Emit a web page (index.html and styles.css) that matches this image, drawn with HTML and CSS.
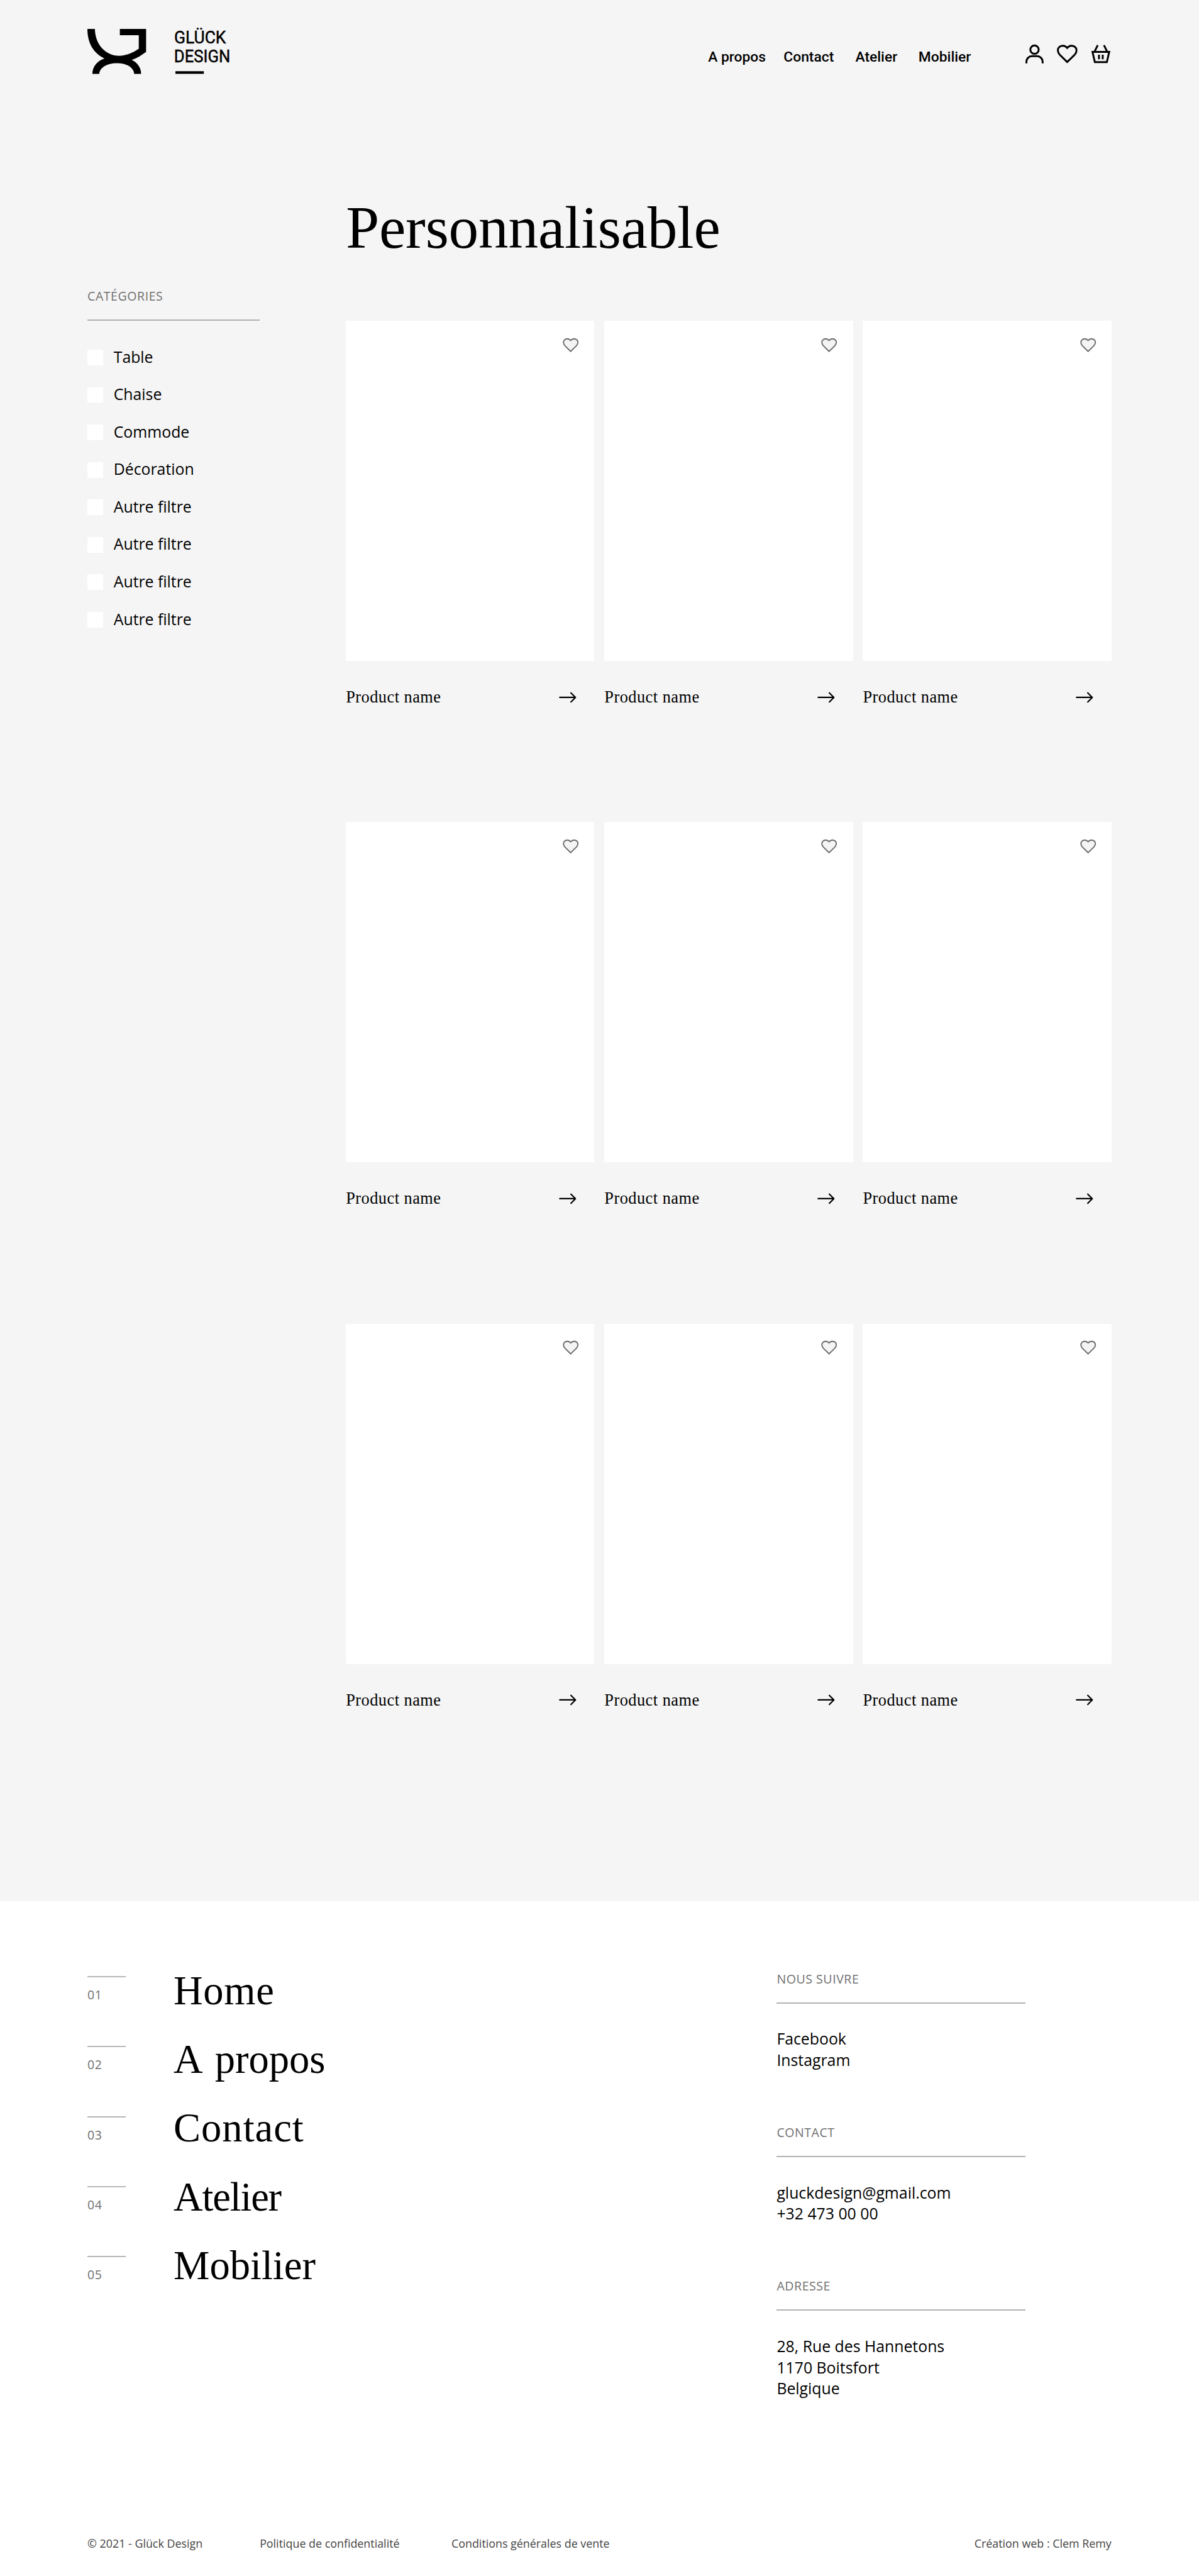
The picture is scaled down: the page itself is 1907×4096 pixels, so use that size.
FILE: index.html
```html
<!DOCTYPE html>
<html lang="fr">
<head>
<meta charset="utf-8">
<title>Glück Design – Personnalisable</title>
<link rel="stylesheet" href="styles.css">
</head>
<body>
<svg class="sprite" aria-hidden="true">
  <symbol id="heart" viewBox="0 0 33 30"><path d="M16.5 27.8 5 16.6C.8 12.4.6 7 3.5 4.1 7 .7 12.8 1 16.5 5.200C20.200 1 26 .7 29.500 4.100 32.400 7 32.200 12.400 28 16.600Z"/></symbol>
  <symbol id="arrow" viewBox="0 0 28 18"><path d="M1.300 9H26.500M19.200 1.700 26.500 9l-7.300 7.300"/></symbol>
</svg>

<header class="header">
  <a class="logo" aria-label="Glück Design">
    <svg viewBox="0 0 230 76">
      <path d="M0 0H12C12.500 25 29 43 51 43 62 43 73 38 82.300 31.700V10H52V0H94V36.700C87 42 79 47 71 49.700 80 54 86 62 86 72H75C74 61 62 55 47 55 31 55 20 62 19 72H8C8 61 15 51.500 27.300 47.300 10 39 0 23 0 0Z"/>
      <text x="139" y="23" textLength="83" lengthAdjust="spacingAndGlyphs">GLÜCK</text>
      <text x="138.800" y="53.300" textLength="90" lengthAdjust="spacingAndGlyphs">DESIGN</text>
      <rect x="141" y="67.700" width="45.500" height="4.200"/>
    </svg>
  </a>
  <nav class="nav">
    <a>A propos</a><a>Contact</a><a>Atelier</a><a>Mobilier</a>
  </nav>
  <div class="tools">
    <svg class="icon user" viewBox="0 0 29 31"><circle cx="14.500" cy="9" r="6.700"/><path d="M1.500 31V29C1.500 23 5.500 19.500 10.500 19.500H18.500C23.500 19.500 27.500 23 27.500 29V31"/></svg>
    <svg class="icon heart"><use href="#heart"/></svg>
    <svg class="icon basket" viewBox="0 0 30 31"><path d="M1.600 12.500H28.400L24.600 29H5.400ZM5 12 10 1.800M25 12 20 1.800M12 17.200V24.500M18 17.200V24.500"/></svg>
  </div>
</header>

<main class="main">
  <aside class="filters">
    <h2 class="label">CATÉGORIES</h2>
    <ul>
      <li><i></i><span>Table</span></li>
      <li><i></i><span>Chaise</span></li>
      <li><i></i><span>Commode</span></li>
      <li><i></i><span>Décoration</span></li>
      <li><i></i><span>Autre filtre</span></li>
      <li><i></i><span>Autre filtre</span></li>
      <li><i></i><span>Autre filtre</span></li>
      <li><i></i><span>Autre filtre</span></li>
    </ul>
  </aside>
  <section class="catalog">
    <h1>Personnalisable</h1>
    <div class="products">
      <article><div class="photo"><svg><use href="#heart"/></svg></div><div class="caption"><h3>Product name</h3><svg><use href="#arrow"/></svg></div></article>
      <article><div class="photo"><svg><use href="#heart"/></svg></div><div class="caption"><h3>Product name</h3><svg><use href="#arrow"/></svg></div></article>
      <article><div class="photo"><svg><use href="#heart"/></svg></div><div class="caption"><h3>Product name</h3><svg><use href="#arrow"/></svg></div></article>
      <article><div class="photo"><svg><use href="#heart"/></svg></div><div class="caption"><h3>Product name</h3><svg><use href="#arrow"/></svg></div></article>
      <article><div class="photo"><svg><use href="#heart"/></svg></div><div class="caption"><h3>Product name</h3><svg><use href="#arrow"/></svg></div></article>
      <article><div class="photo"><svg><use href="#heart"/></svg></div><div class="caption"><h3>Product name</h3><svg><use href="#arrow"/></svg></div></article>
      <article><div class="photo"><svg><use href="#heart"/></svg></div><div class="caption"><h3>Product name</h3><svg><use href="#arrow"/></svg></div></article>
      <article><div class="photo"><svg><use href="#heart"/></svg></div><div class="caption"><h3>Product name</h3><svg><use href="#arrow"/></svg></div></article>
      <article><div class="photo"><svg><use href="#heart"/></svg></div><div class="caption"><h3>Product name</h3><svg><use href="#arrow"/></svg></div></article>
    </div>
  </section>
</main>

<footer class="footer">
  <div class="footer-main">
    <ol class="numbers"><li>01</li><li>02</li><li>03</li><li>04</li><li>05</li></ol>
    <ul class="menu"><li>Home</li><li>A propos</li><li>Contact</li><li>Atelier</li><li>Mobilier</li></ul>
    <div class="infos">
      <section><h2 class="label">NOUS SUIVRE</h2><p>Facebook<br>Instagram</p></section>
      <section><h2 class="label">CONTACT</h2><p>gluckdesign@gmail.com<br>+32 473 00 00</p></section>
      <section><h2 class="label">ADRESSE</h2><p>28, Rue des Hannetons<br>1170 Boitsfort<br>Belgique</p></section>
    </div>
  </div>
  <div class="legal">
    <span>© 2021 - Glück Design</span><span>Politique de confidentialité</span><span>Conditions générales de vente</span><span>Création web : Clem Remy</span>
  </div>
</footer>
</body>
</html>
```
FILE: styles.css
```css
* { box-sizing: border-box; margin: 0; padding: 0; }
html { font-size: 9.931px; }
body {
  width: 192rem;
  height: 4096px;
  overflow: hidden;
  background: #f5f5f5;
  color: #000;
  font-family: "Open Sans", "Noto Sans", sans-serif;
}
ul, ol { list-style: none; }
svg { display: block; flex: none; }
.sprite { display: none; }

/* Header */
.header { display: flex; align-items: flex-start; height: 30.4rem; padding: 4.6rem 14rem 0; }
.logo svg { width: 23rem; height: 7.6rem; overflow: visible; }
.logo text { font: 400 27px Roboto, sans-serif; stroke: #000; stroke-width: .5; }
.nav { display: flex; margin: 3.06rem 0 0 76.4rem; font: 500 2.3rem/3rem Roboto, sans-serif; white-space: nowrap; }
.nav a:nth-child(1) { width: 12.1rem; }
.nav a:nth-child(2) { width: 11.5rem; }
.nav a:nth-child(3) { width: 10.1rem; }
.nav a:nth-child(4) { width: 8.4rem; }
.tools { display: flex; margin: 2.45rem .2rem 0 auto; }
.icon { fill: none; stroke: #000; stroke-width: 3; }
.user { width: 2.9rem; height: 3.1rem; }
.heart { width: 3.3rem; height: 3rem; margin: .15rem 2.2rem 0; }
.basket { width: 3rem; height: 3.1rem; }

/* Filters */
.main { display: flex; height: 274.05rem; padding: 0 14rem; }
.filters { width: 27.6rem; margin-right: 13.8rem; padding-top: 15.85rem; }
.label {
  padding-bottom: 2.55rem;
  border-bottom: 2px solid #b2b2b2;
  color: #707070;
  font-size: 1.97rem;
  font-weight: 400;
  line-height: 2.4rem;
  letter-spacing: .055rem;
}
.filters ul { margin-top: 2.84rem; }
.filters li { display: flex; align-items: center; gap: 1.7rem; height: 6rem; font-size: 2.5rem; line-height: 3.4rem; }
.filters i { width: 2.5rem; height: 2.5rem; background: #fff; }
.filters span { padding-bottom: .2rem; }

/* Catalog */
.catalog { width: 122.6rem; }
h1 { height: 20.93rem; padding-top: .1rem; font: 400 9.6rem/12rem "Liberation Serif", serif; letter-spacing: -.02rem; }
.products { display: grid; grid-template-columns: repeat(3, 39.8rem); grid-auto-rows: 80.3rem; column-gap: 1.6rem; }
.photo { display: flex; justify-content: flex-end; height: 54.47rem; padding: 2.7rem 2.5rem; background: #fff; }
.photo svg { width: 2.55rem; height: 2.4rem; fill: #f4f4f4; stroke: #6c6c6c; stroke-width: 2.5; }
.caption { display: flex; justify-content: space-between; align-items: center; margin-top: 3.82rem; padding-right: 2.9rem; }
h3 { font: 400 2.65rem/4rem "Liberation Serif", serif; letter-spacing: .05rem; }
.caption svg { width: 2.8rem; height: 1.8rem; fill: none; stroke: #000; stroke-width: 2.2; stroke-linecap: round; stroke-linejoin: round; }

/* Footer */
.footer { height: 109rem; padding: 0 14rem; background: #fff; }
.footer-main { display: flex; height: 101.7rem; }
.numbers { width: 6.1rem; margin-right: 7.7rem; padding-top: 11.95rem; }
.numbers li { height: 11.2rem; padding-top: 1.62rem; border-top: 2px solid #b8b8b8; color: #707070; font-size: 1.97rem; line-height: 2.4rem; letter-spacing: .06rem; }
.menu { width: 96.6rem; padding-top: 8.8rem; font: 400 6.5rem/11rem "Liberation Serif", serif; }
.menu li:nth-child(1) { letter-spacing: .07rem; }
.menu li:nth-child(2) { word-spacing: .65rem; }
.menu li:nth-child(3) { letter-spacing: .1rem; }
.menu li:nth-child(4) { letter-spacing: -.12rem; }
.infos { width: 39.8rem; padding-top: 11.2rem; }
.infos section { height: 24.6rem; }
.infos p { margin-top: 3.98rem; font-size: 2.5rem; line-height: 3.4rem; }
.legal { display: flex; color: #444; font-size: 1.8rem; line-height: 2.4rem; white-space: nowrap; }
.legal span:nth-child(1) { width: 27.6rem; }
.legal span:nth-child(2) { width: 30.7rem; }
.legal span:last-child { margin-left: auto; }
```
